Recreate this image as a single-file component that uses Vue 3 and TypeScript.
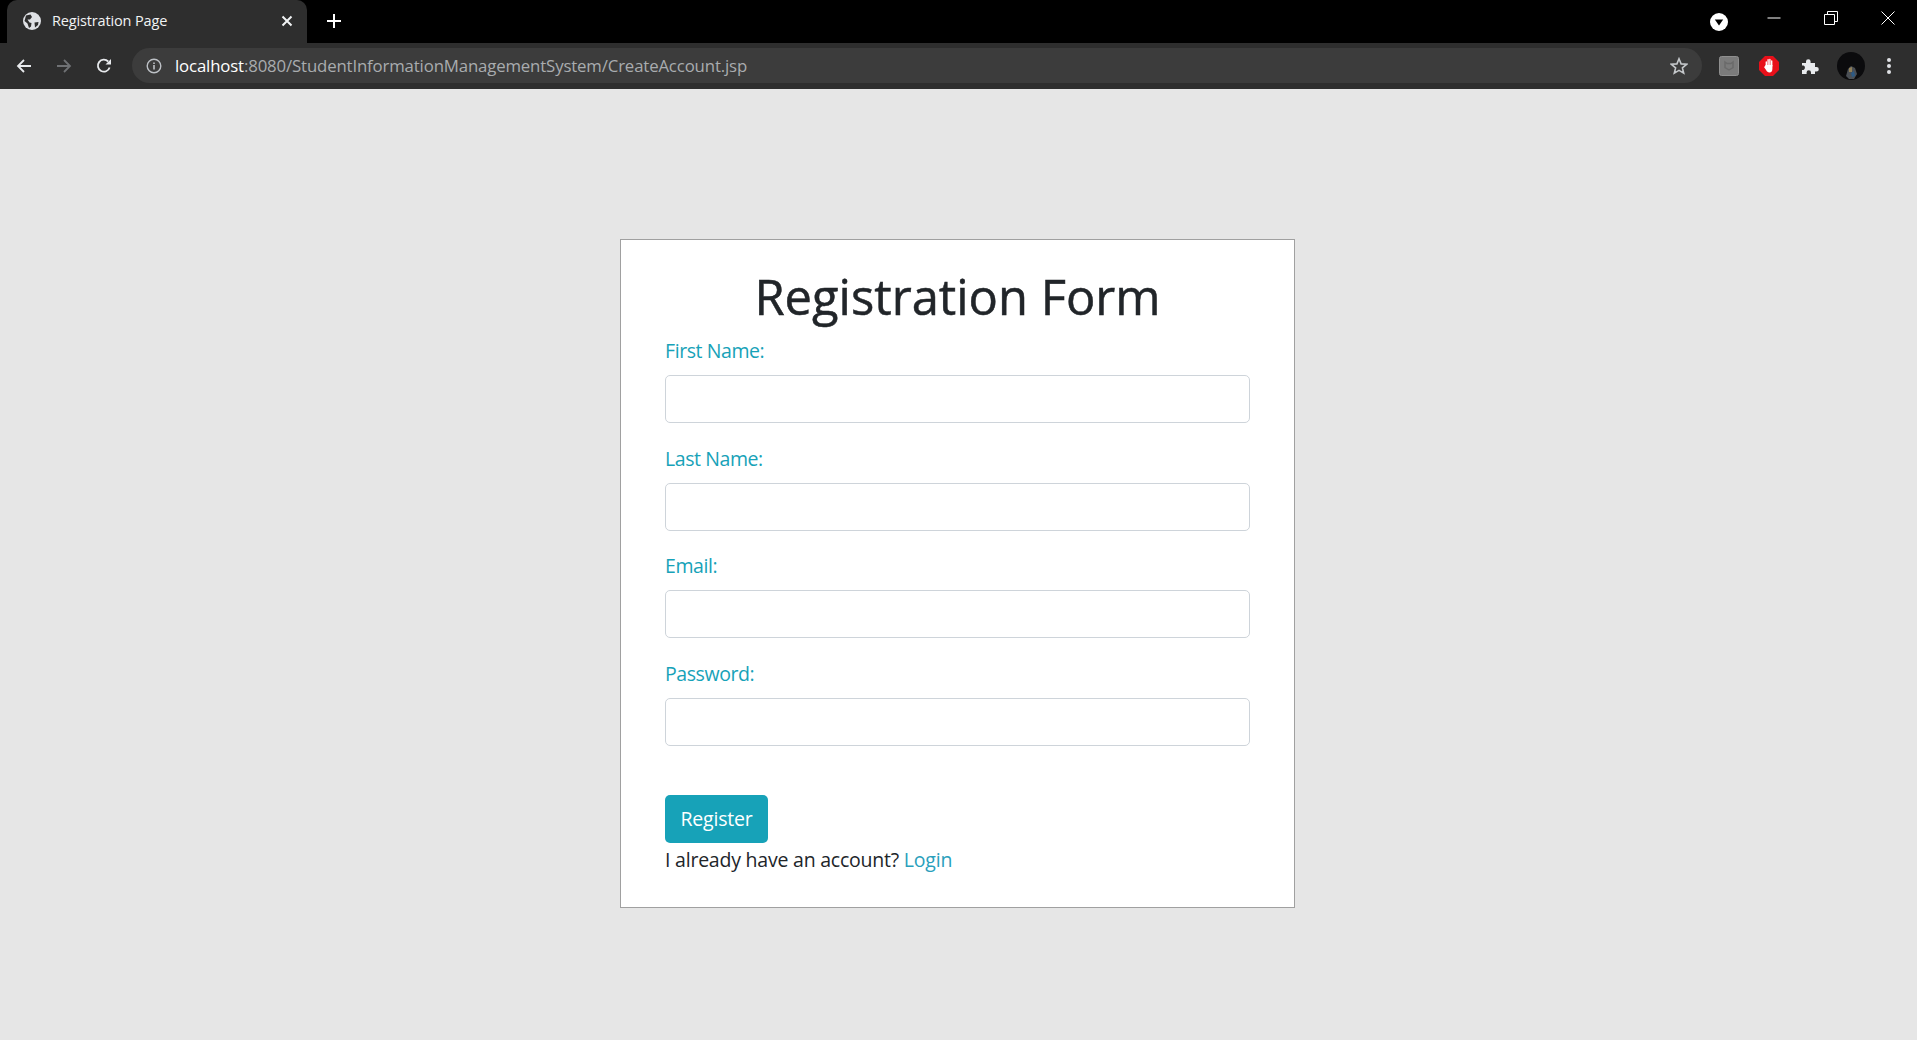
<script setup lang="ts">
const fields: string[] = ['First Name:', 'Last Name:', 'Email:', 'Password:']
</script>

<template>
  <div class="window">
    <header class="chrome">
      <div class="tabstrip">
        <div class="tab">
          <svg class="globe" width="18" height="18" viewBox="0 0 18 18">
            <circle cx="9" cy="9" r="9" fill="#dfe1e5" />
            <path d="M3 3.5 7.5 2.5 9 5 7 7.5 4.5 7.5 6.5 10.5 8.5 11 8 14.5 6 16 4.5 11.5 1.5 9Z" fill="#2e2e2e" />
            <path d="M11.5 10.5 15.5 10 15 13 12 15.5Z" fill="#2e2e2e" />
          </svg>
          <span class="tabtitle">Registration Page</span>
          <svg class="tabclose" width="12" height="12" viewBox="0 0 12 12">
            <path d="M1.5 1.5 10.5 10.5M10.5 1.5 1.5 10.5" stroke="#f1f3f4" stroke-width="2" />
          </svg>
        </div>
        <svg class="newtab" width="16" height="16" viewBox="0 0 16 16">
          <path d="M8 1V15M1 8H15" stroke="#fff" stroke-width="2" />
        </svg>
        <div class="spacer"></div>
        <svg class="tabsearch" width="18" height="18" viewBox="0 0 18 18">
          <circle cx="9" cy="9" r="9" fill="#fff" />
          <path d="M4.8 6.5H13.2L9 12.5Z" fill="#000" />
        </svg>
        <div class="wincontrols">
          <svg width="14" height="14" viewBox="0 0 14 14"><path d="M0.5 7H13.5" stroke="#fff" /></svg>
          <svg width="14" height="14" viewBox="0 0 14 14">
            <path d="M0.5 3.5H10.5V13.5H0.5Z M3.5 3.5V0.5H13.5V10.5H10.5" fill="none" stroke="#fff" />
          </svg>
          <svg width="14" height="14" viewBox="0 0 14 14"><path d="M0.5 0.5 13.5 13.5M13.5 0.5 0.5 13.5" stroke="#fff" /></svg>
        </div>
      </div>
      <div class="toolbar">
        <nav class="nav">
          <svg width="16" height="16" viewBox="0 0 16 16">
            <path d="M15 8H2M8 2 2 8 8 14" fill="none" stroke="#e8eaed" stroke-width="1.8" />
          </svg>
          <svg width="16" height="16" viewBox="0 0 16 16">
            <path d="M1 8H14M8 2 14 8 8 14" fill="none" stroke="#6f7174" stroke-width="1.8" />
          </svg>
          <svg width="16" height="16" viewBox="0 0 16 16">
            <path d="M13.6 9.5A6 6 0 1 1 12.2 3.5" fill="none" stroke="#e8eaed" stroke-width="1.8" />
            <path d="M15 1V6.5H9.5Z" fill="#e8eaed" />
          </svg>
        </nav>
        <div class="omnibox">
          <svg width="16" height="16" viewBox="0 0 16 16">
            <circle cx="8" cy="8" r="6.8" fill="none" stroke="#bdc1c6" stroke-width="1.4" />
            <path d="M8 7V11.6M8 4.4V6" stroke="#bdc1c6" stroke-width="1.6" />
          </svg>
          <span class="url"><span class="host">localhost</span>:8080/StudentInformationManagementSystem/CreateAccount.jsp</span>
          <svg class="star" width="18" height="18" viewBox="0 0 18 18">
            <path d="M9 1.8 11.1 6.9 16.6 7.3 12.4 10.9 13.7 16.2 9 13.4 4.3 16.2 5.6 10.9 1.4 7.3 6.9 6.9Z" fill="none" stroke="#c4c7ca" stroke-width="1.6" />
          </svg>
        </div>
        <div class="extensions">
          <svg width="20" height="20" viewBox="0 0 20 20">
            <rect x="0.5" y="0.5" width="19" height="19" rx="2" fill="#7b7b7b" stroke="#8f8f8f" />
            <path d="M6 6 8 7.5H12L14 6V11.5L10 14 6 11.5Z" fill="none" stroke="#6a6a6a" stroke-width="1.4" />
          </svg>
          <svg width="20" height="20" viewBox="0 0 20 20">
            <path d="M6 0H14L20 6V14L14 20H6L0 14V6Z" fill="#e8101a" />
            <path d="M7.3 10V6M9.1 9V3.8M10.9 9V3.4M12.7 10V5" stroke="#fff" stroke-width="1.4" stroke-linecap="round" />
            <path d="M6.6 9H13.4V12.5C13.4 15 12.6 16.4 10.4 16.4 8.8 16.4 8 15.6 7.2 14.2L5 11 5.9 10.2Z" fill="#fff" />
          </svg>
          <svg class="puzzle" width="18" height="18" viewBox="0 0 18 18">
            <path d="M1 6H5V4.5A2.3 2.3 0 0 1 9.6 4.5V6H14V10H15.5A2.3 2.3 0 0 1 15.5 14.6H14V17H10V15.5A2.2 2.2 0 0 0 5.6 15.5V17H1V13H2.5A2.4 2.4 0 0 0 2.5 8.6H1Z" fill="#e8eaed" />
          </svg>
          <svg width="28" height="28" viewBox="0 0 28 28">
            <circle cx="14" cy="14" r="14" fill="#0b0b0d" />
            <path d="M9 24 11 17 14 14 18 16 20 22 17 27 12 27Z" fill="#4a4f55" />
            <path d="M14 21 17 19 18 24 15 25Z" fill="#2c5a85" />
            <path d="M12 16 15 15 15 20 12 20Z" fill="#8f7f58" />
          </svg>
          <svg class="dots" width="6" height="18" viewBox="0 0 6 18">
            <circle cx="3" cy="3" r="2" fill="#dfe1e5" />
            <circle cx="3" cy="9" r="2" fill="#dfe1e5" />
            <circle cx="3" cy="15" r="2" fill="#dfe1e5" />
          </svg>
        </div>
      </div>
    </header>

    <main class="page">
      <section class="card">
        <h1>Registration Form</h1>
        <form @submit.prevent>
          <div v-for="field in fields" :key="field" class="group">
            <label>{{ field }}</label>
            <input class="control" type="text" />
          </div>
          <button class="register" type="submit">Register</button>
        </form>
        <p class="already">I already have an account? <a href="#">Login</a></p>
      </section>
    </main>
  </div>
</template>

<style scoped>
.window {
  display: flex;
  flex-direction: column;
  height: 1040px;
  overflow: hidden;
  background: #e6e6e6;
  font-family: "Open Sans", "Noto Sans", sans-serif;
}
.chrome { flex: none; }
.tabstrip {
  display: flex;
  align-items: flex-start;
  height: 43px;
  background: #000;
}
.tab {
  display: flex;
  align-items: center;
  box-sizing: border-box;
  width: 300px;
  height: 43px;
  margin-left: 7px;
  padding: 0 14px 1px 16px;
  background: #2e2e2e;
  border-radius: 10px 10px 0 0;
}
.tabtitle {
  flex: 1;
  margin-left: 11px;
  margin-bottom: 1px;
  color: #f1f3f4;
  font: 14.5px "Open Sans", sans-serif;
  letter-spacing: -0.15px;
}
.newtab { margin: 13px 0 0 19px; }
.spacer { flex: 1; }
.tabsearch { margin: 13px 0 0 0; }
.wincontrols {
  display: flex;
  gap: 43px;
  margin: 11px 22px 0 39px;
}
.toolbar {
  display: flex;
  align-items: center;
  box-sizing: border-box;
  height: 46px;
  padding-bottom: 1px;
  background: #2e2e2e;
}
.nav {
  display: flex;
  gap: 24px;
  padding-left: 16px;
}
.omnibox {
  display: flex;
  flex: 1;
  align-items: center;
  height: 35px;
  margin-left: 20px;
  padding: 0 14px 0 14px;
  background: #3c3c3c;
  border-radius: 18px;
}
.url {
  flex: 1;
  margin-left: 13px;
  margin-bottom: 1px;
  color: #a9acaf;
  font: 16.8px "Open Sans", sans-serif;
  letter-spacing: -0.15px;
}
.host { color: #fff; }
.extensions {
  display: flex;
  align-items: center;
  gap: 20px;
  padding: 0 25px 0 17px;
}
.puzzle { margin: 0 -2px 0 2px; }
.dots { margin-left: 1px; }
.page {
  flex: 1;
  display: flex;
  justify-content: center;
  align-items: flex-start;
  padding-top: 150px;
  padding-right: 2px;
}
.card {
  box-sizing: border-box;
  width: 675px;
  height: 669px;
  padding: 18px 44px 0;
  background: #fff;
  border: 1px solid #a0a0a0;
  color: #212529;
}
h1 {
  margin: 0 0 2px;
  font-size: 48.9px;
  font-weight: 400;
  line-height: 76px;
  text-align: center;
  -webkit-text-stroke: 0.5px #212529;
}
.group { display: flex; flex-direction: column; margin-bottom: 20.6px; }
label {
  color: #17a2b8;
  font-size: 19.5px;
  line-height: 29px;
  margin-bottom: 10px;
  letter-spacing: -0.42px;
}
.control {
  box-sizing: border-box;
  width: 100%;
  height: 48px;
  padding: 0 15px;
  background: #fff;
  border: 1px solid #ced4da;
  border-radius: 5px;
}
.register {
  display: block;
  width: 103px;
  height: 48px;
  margin-top: 49px;
  padding: 0 0 0 0;
  background: #17a2b8;
  border: 0;
  border-radius: 5px;
  color: #fff;
  font-family: inherit;
  font-size: 19.5px;
  letter-spacing: -0.2px;
}
.already {
  margin: 2px 0 0;
  font-size: 19.5px;
  line-height: 29px;
  letter-spacing: -0.22px;
}
.already a { color: #2a9fbc; text-decoration: none; }
</style>

<style>
html, body { margin: 0; background: #e6e6e6; }
</style>
